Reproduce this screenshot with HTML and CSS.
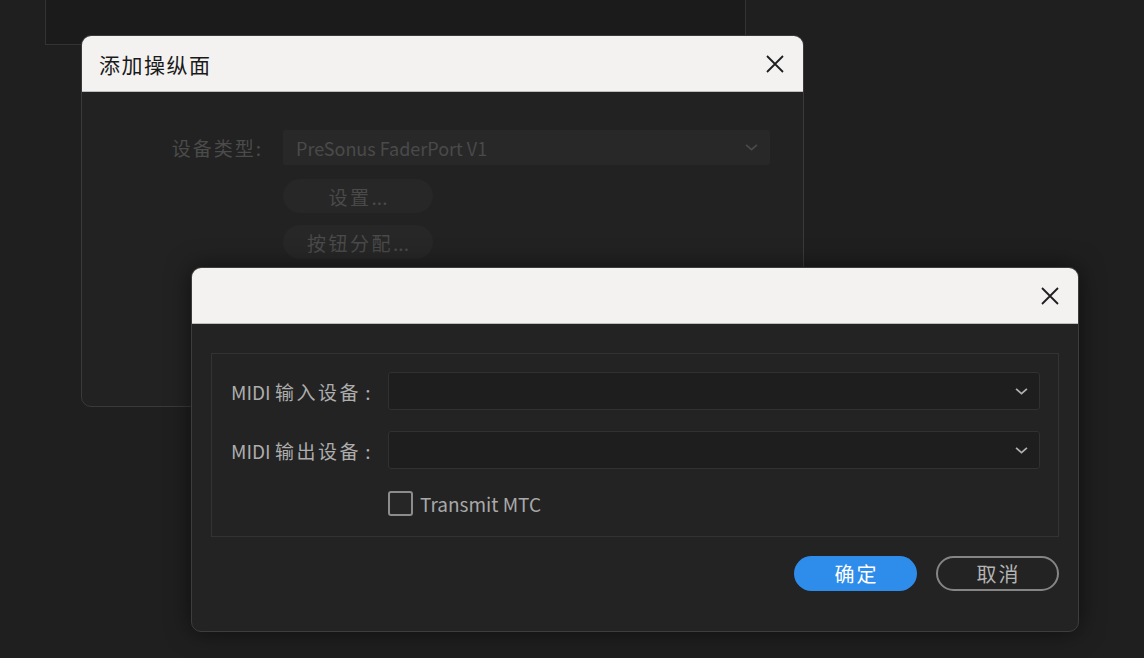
FILE: index.html
```html
<!DOCTYPE html>
<html lang="zh-CN">
<head>
  <meta charset="UTF-8" />
  <title>添加操纵面</title>
  <link rel="stylesheet" href="styles.css">
</head>
<body>
  <div class="desktop">
    <!-- Main window peeking out behind the dialogs -->
    <div class="window-behind"></div>

    <!-- Add control surface dialog (inactive) -->
    <div class="dialog dialog-back">
      <div class="titlebar">
        <span class="title">添加操纵面</span>
        <svg class="close" viewBox="0 0 20 20"><path d="M2 2 L18 18 M18 2 L2 18"/></svg>
      </div>
      <div class="back-body">
        <div class="back-row">
          <span class="back-label">设备类型:</span>
          <div class="back-select">
            <span>PreSonus FaderPort V1</span>
            <svg class="chev" viewBox="0 0 12 8"><path d="M1 1.5 L6 6 L11 1.5"/></svg>
          </div>
        </div>
        <div class="back-row">
          <span></span>
          <div class="back-btn"><span class="cjk">设置</span>...</div>
        </div>
        <div class="back-row">
          <span></span>
          <div class="back-btn"><span class="cjk">按钮分配</span>...</div>
        </div>
      </div>
    </div>

    <!-- MIDI settings dialog -->
    <div class="dialog dialog-front">
      <div class="titlebar">
        <span class="title"></span>
        <svg class="close" viewBox="0 0 20 20"><path d="M2 2 L18 18 M18 2 L2 18"/></svg>
      </div>
      <div class="front-body">
        <div class="group">
          <div class="midi-row">
            <span class="midi-label">MIDI <span class="cjk">输入设备</span> :</span>
            <div class="select">
              <svg class="chev" viewBox="0 0 12 8"><path d="M1 1.5 L6 6 L11 1.5"/></svg>
            </div>
          </div>
          <div class="midi-row">
            <span class="midi-label">MIDI <span class="cjk">输出设备</span> :</span>
            <div class="select">
              <svg class="chev" viewBox="0 0 12 8"><path d="M1 1.5 L6 6 L11 1.5"/></svg>
            </div>
          </div>
          <div class="midi-row">
            <span></span>
            <label class="check">
              <span class="box"></span>
              <span>Transmit MTC</span>
            </label>
          </div>
        </div>
        <div class="actions">
          <button class="btn btn-primary">确定</button>
          <button class="btn btn-outline">取消</button>
        </div>
      </div>
    </div>
  </div>
</body>
</html>
```

FILE: styles.css
```css
body {
  margin: 0;
  background: #1e1e1e;
  font-family: "Noto Sans CJK SC", "Noto Sans", sans-serif;
}

.desktop {
  position: relative;
  width: 1144px;
  height: 658px;
  overflow: hidden;
  background: #1f1f1f;
}

.window-behind {
  position: absolute;
  left: 45px;
  top: -10px;
  width: 699px;
  height: 53px;
  background: #1b1b1b;
  border: 1px solid #333;
}

/* Dialog frames */
.dialog {
  position: absolute;
  background: #222;
  border: 1px solid #3a3a3a;
  border-radius: 10px;
  overflow: hidden;
  box-sizing: border-box;
}

.dialog-back {
  left: 81px;
  top: 35px;
  width: 723px;
  height: 372px;
}

.dialog-front {
  left: 191px;
  top: 267px;
  width: 888px;
  height: 365px;
  background: #232323;
  border-color: #3d3d3d;
  box-shadow: 0 0 24px rgba(0, 0, 0, 0.55);
}

.titlebar {
  height: 56px;
  background: #f3f2f1;
  border-bottom: 1px solid #bdbdbd;
  display: flex;
  align-items: center;
  justify-content: space-between;
  padding: 0 18px 0 17px;
  box-sizing: border-box;
}

.title {
  font-size: 21px;
  letter-spacing: 1.5px;
  color: #1a1a1a;
}

.close {
  width: 20px;
  height: 20px;
  fill: none;
  stroke: #1e1e1e;
  stroke-width: 1.8;
}

.chev {
  width: 13px;
  height: 9px;
  fill: none;
  stroke: #b0b0b0;
  stroke-width: 1.6;
}

.cjk {
  letter-spacing: 2.5px;
}

/* Inactive dialog content */
.back-body {
  padding-top: 38px;
  display: flex;
  flex-direction: column;
  gap: 12px;
}

.back-row {
  display: grid;
  grid-template-columns: 181px 487px;
  column-gap: 20px;
  align-items: center;
}

.back-row:nth-child(2) {
  margin-top: 2px;
}

.back-label {
  text-align: right;
  font-size: 19px;
  letter-spacing: 2px;
  color: #4b4b4b;
}

.back-select {
  height: 35px;
  background: #282828;
  border-radius: 2px;
  display: flex;
  align-items: center;
  justify-content: space-between;
  padding: 0 12px 0 13px;
  font-size: 18px;
  color: #4a4a4a;
}

.back-select .chev {
  stroke: #4a4a4a;
}

.back-btn {
  width: 150px;
  height: 34px;
  border-radius: 17px;
  background: #272727;
  color: #4a4a4a;
  font-size: 19px;
  display: flex;
  align-items: center;
  justify-content: center;
}

/* MIDI dialog content */
.front-body {
  padding: 29px 19px 0;
}

.group {
  border: 1px solid #333;
  padding: 18px 18px 19px 19px;
  display: flex;
  flex-direction: column;
  gap: 21px;
}

.midi-row {
  display: grid;
  grid-template-columns: 147px 1fr;
  column-gap: 10px;
  align-items: center;
}

.midi-label {
  font-size: 19px;
  color: #adadad;
  white-space: nowrap;
}

.select {
  height: 38px;
  box-sizing: border-box;
  background: #1e1e1e;
  border: 1px solid #313131;
  border-radius: 3px;
  display: flex;
  align-items: center;
  justify-content: flex-end;
  padding-right: 11px;
}

.check {
  display: flex;
  align-items: center;
  gap: 7px;
  font-size: 19px;
  color: #a9a9a9;
}

.box {
  width: 25px;
  height: 25px;
  box-sizing: border-box;
  border: 2px solid #8c8c8c;
  border-radius: 3px;
  background: #262626;
}

.actions {
  display: flex;
  justify-content: flex-end;
  gap: 19px;
  margin-top: 19px;
}

.btn {
  width: 123px;
  height: 35px;
  border-radius: 18px;
  font-family: inherit;
  font-size: 20px;
  letter-spacing: 2px;
  padding: 0 0 0 2px;
  box-sizing: border-box;
}

.btn-primary {
  background: #2e8ceb;
  border: none;
  color: #fff;
}

.btn-outline {
  background: transparent;
  border: 2px solid #858585;
  color: #b4b4b4;
}
```
